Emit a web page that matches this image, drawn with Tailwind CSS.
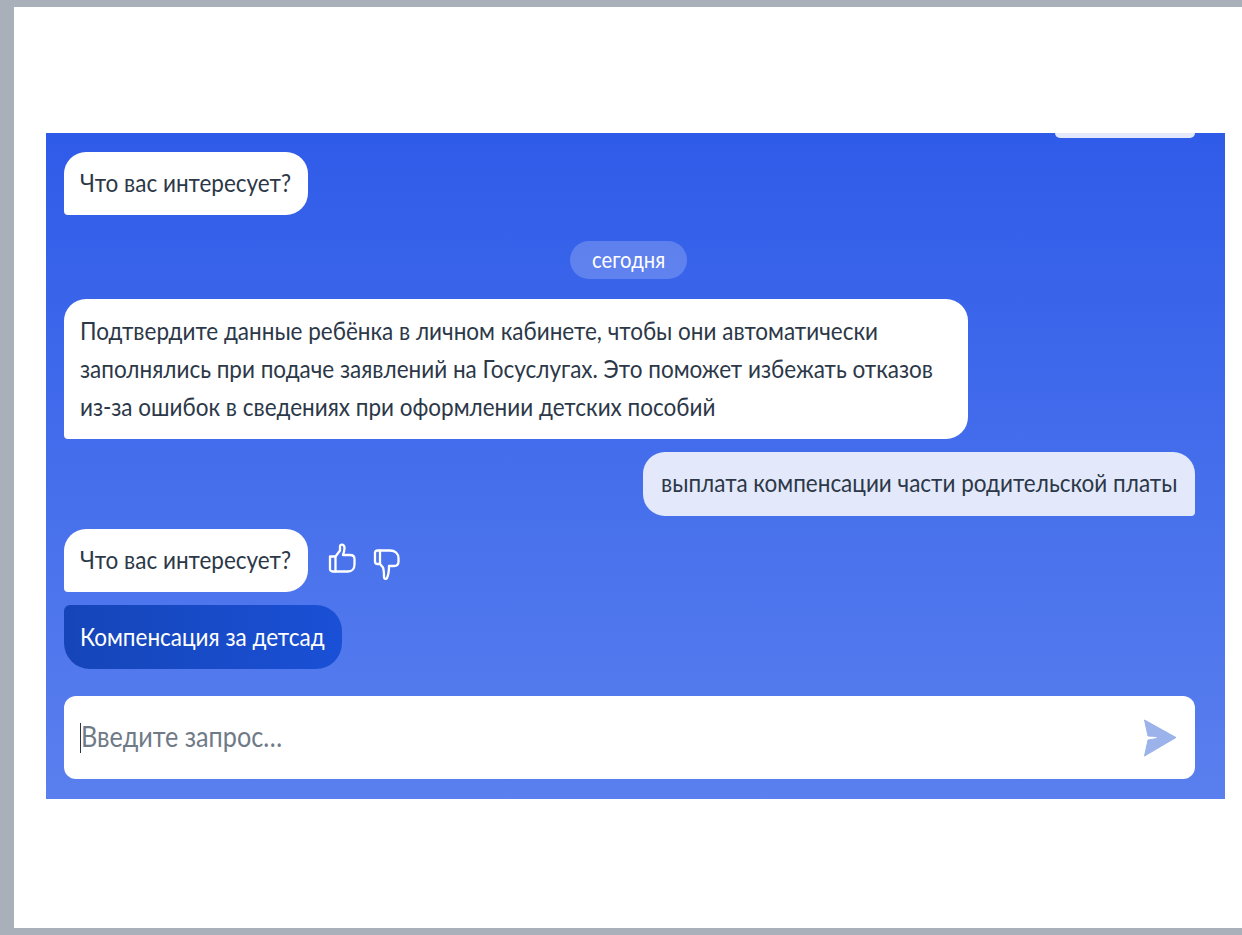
<!DOCTYPE html>
<html lang="ru">
<head>
  <meta charset="UTF-8" />
  <title>Чат</title>
  <script src="https://cdn.jsdelivr.net/npm/@tailwindcss/browser@4"></script>
</head>
<body class="bg-[#a9b0ba] font-['Lato','Noto_Sans',sans-serif] overflow-hidden">
  <div class="h-[935px] pt-[7px] pb-[7px] pl-[14px]">
    <div class="h-[921px] bg-white pt-[126px] pl-[32px] pr-[17px]">

      <!-- Chat panel -->
      <div class="h-[666px] overflow-hidden bg-gradient-to-b from-[#2f5be9] to-[#5a7fee] pl-[18px] pr-[30px] flex flex-col items-start text-[25px] text-[#2c3848]">
        <div class="self-end w-[140px] h-[5px] shrink-0 bg-[#e3e9fb] rounded-b-[6px]"></div>

        <div class="mt-[14px] w-[244px] h-[63px] px-4 pb-[2px] flex items-center bg-white rounded-t-[22px] rounded-br-[22px] rounded-bl-[4px]">
          <span class="whitespace-nowrap origin-left scale-x-[0.9]">Что вас интересует?</span>
        </div>

        <div class="self-center mt-[26px] ml-[-2px] h-[38px] w-[117px] flex items-center justify-center rounded-full bg-white/20 text-white text-[22.500px]">
          <span class="whitespace-nowrap scale-x-[0.9]">сегодня</span>
        </div>

        <div class="mt-[20px] w-[904px] h-[140px] px-4 pt-[12px] bg-white rounded-t-[22px] rounded-br-[22px] rounded-bl-[4px] leading-[38px]">
          <div class="whitespace-nowrap origin-left scale-x-[0.9]">Подтвердите данные ребёнка в личном кабинете, чтобы они автоматически</div>
          <div class="whitespace-nowrap origin-left scale-x-[0.9]">заполнялись при подаче заявлений на Госуслугах. Это поможет избежать отказов</div>
          <div class="whitespace-nowrap origin-left scale-x-[0.9]">из-за ошибок в сведениях при оформлении детских пособий</div>
        </div>

        <div class="self-end mt-[13px] w-[552px] h-[64px] px-[18px] pb-[2px] flex items-center bg-[#e3e9fb] rounded-t-[22px] rounded-bl-[22px] rounded-br-[4px]">
          <span class="whitespace-nowrap origin-left scale-x-[0.9]">выплата компенсации части родительской платы</span>
        </div>

        <div class="mt-[13px] flex items-center">
          <div class="w-[244px] h-[63px] px-4 pb-[1px] flex items-center bg-white rounded-t-[22px] rounded-br-[22px] rounded-bl-[4px]">
            <span class="whitespace-nowrap origin-left scale-x-[0.9]">Что вас интересует?</span>
          </div>
          <svg class="ml-[20px] mb-[4px]" width="28" height="31" viewBox="0 0 28 31" fill="none" stroke="white" stroke-width="2.300" stroke-linejoin="round" stroke-linecap="round">
            <path d="M2 13.500h5.500v15H4.500a2.500 2.500 0 0 1-2.500-2.500z" />
            <path d="M7.500 13.500l4.500-6V3.500c0-3 4.500-2.500 4.500 1.500 0 3-1 5.500-1.500 7h7c3 0 4.500 1.500 4.500 4v5.500c0 4-2.500 7-6.500 7H7.500" />
          </svg>
          <svg class="ml-[17px] mt-[8px]" width="28" height="32" viewBox="0 0 28 32" fill="none" stroke="white" stroke-width="2.300" stroke-linejoin="round" stroke-linecap="round">
            <path d="M2 3.500A2.500 2.500 0 0 1 4.500 1.500H17c5 0 8.500 3 8.500 8v3c0 3-2 4.500-4.500 4.500h-5c0 4-.5 9-2 12-1 1.500-3 1-3-1 0-4 0-7-1-9.500L7 15H4.500A2.500 2.500 0 0 1 2 12.500z" />
            <path d="M7 1.500V15" />
          </svg>
        </div>

        <div class="mt-[13px] w-[278px] h-[64px] px-4 flex items-center text-white bg-gradient-to-r from-[#1545b8] to-[#1a50d6] rounded-t-[26px] rounded-br-[26px] rounded-bl-[26px] rounded-tl-[6px]">
          <span class="whitespace-nowrap origin-left scale-x-[0.9]">Компенсация за детсад</span>
        </div>

        <!-- Input -->
        <div class="mt-[27px] w-full h-[83px] shrink-0 bg-white rounded-[12px] pl-4 pr-[18px] flex items-center justify-between">
          <div class="flex items-center text-[28px] text-[#6f7a87]">
            <span class="w-px h-[30px] bg-[#2c3848]"></span>
            <span class="pb-[4px] whitespace-nowrap origin-left scale-x-[0.9]">Введите запрос…</span>
          </div>
          <svg width="34" height="38" viewBox="0 0 34 38" fill="#9bb2ea">
            <path d="M1.500 1L33 18.500 1.500 37 5 21 14 19.500 14 17.500 5 17z" stroke="#9bb2ea" stroke-width="1" stroke-linejoin="round" />
          </svg>
        </div>
      </div>

    </div>
  </div>
</body>
</html>
